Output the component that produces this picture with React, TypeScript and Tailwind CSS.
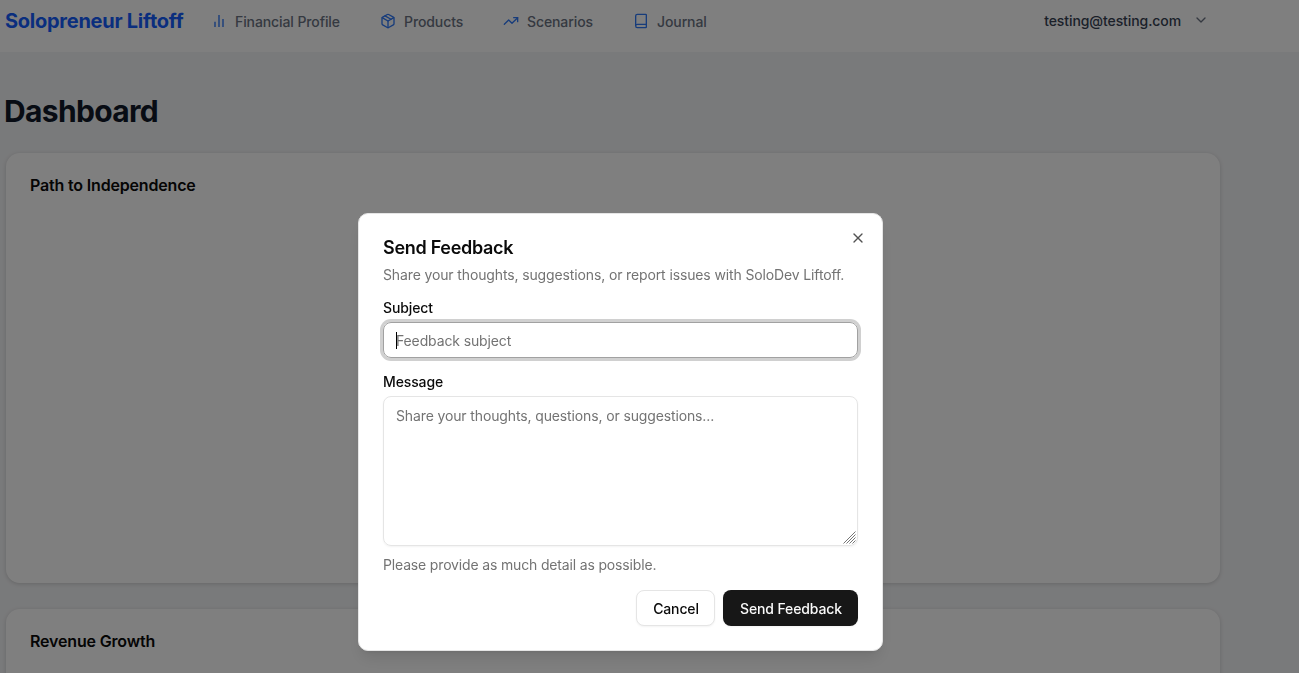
import { useState } from "react";
import type { ReactNode } from "react";
import { Book, ChevronDown, Package, TrendingUp, X } from "lucide-react";

// Plain three-bar icon, drawn on the same 24px grid as the lucide ones.
function BarsIcon({ className }: { className?: string }) {
  return (
    <svg viewBox="0 0 24 24" fill="none" stroke="currentColor" strokeWidth="2.8" className={className}>
      <path d="M18 21V9M12 21V3M6 21v-8" />
    </svg>
  );
}

function NavItem({ icon, label, className }: { icon: ReactNode; label: string; className: string }) {
  return (
    <a href="#" className={`flex items-center gap-2 text-sm font-medium text-gray-500 ${className}`}>
      <span className="-mt-0.5 text-[#2f78f6]">{icon}</span>
      <span className="tracking-[-0.1px]">{label}</span>
    </a>
  );
}

function Header() {
  return (
    <header className="flex h-[52px] items-start bg-white pl-[5px]">
      <div className="flex h-[43px] w-full items-center">
        <span className="-mt-0.5 w-[206px] text-xl font-bold tracking-[-0.26px] text-blue-600">Solopreneur Liftoff</span>
        <nav className="flex items-center">
          <NavItem className="w-[169px]" label="Financial Profile" icon={<BarsIcon className="size-4 opacity-75" />} />
          <NavItem className="w-[123px]" label="Products" icon={<Package className="size-4" />} />
          <NavItem className="w-[130px]" label="Scenarios" icon={<TrendingUp className="size-4" />} />
          <NavItem className="" label="Journal" icon={<Book className="size-4" />} />
        </nav>
        <button className="-mt-px mr-[90px] ml-auto flex items-center gap-3 text-sm font-medium tracking-[-0.09px] text-gray-700">
          testing@testing.com
          <ChevronDown className="-mt-0.5 size-4 text-gray-500" />
        </button>
      </div>
    </header>
  );
}

function Card({ title }: { title: string }) {
  return (
    <section className="h-[430px] w-[1214px] shrink-0 rounded-[14px] bg-white p-6 shadow-[0_1px_4px_rgba(0,0,0,0.16)]">
      <h2 className="text-base leading-4 font-semibold tracking-[-0.17px] text-neutral-950">{title}</h2>
    </section>
  );
}

// Diagonal resize handle in the textarea's bottom right corner.
function Grip() {
  return (
    <svg
      viewBox="0 0 13 13"
      fill="none"
      stroke="#666"
      strokeWidth="0.9"
      className="pointer-events-none absolute right-0.5 bottom-0.5 size-[13px]"
    >
      <path d="M0.5 12.5l12-12M3.5 12.5l9-9M6.5 12.5l6-6M9.5 12.5l3-3" />
    </svg>
  );
}

function FeedbackDialog({ onClose }: { onClose: () => void }) {
  const [subject, setSubject] = useState("");
  const [message, setMessage] = useState("");

  return (
    <div className="fixed inset-0 bg-black/50 pt-[213px] pl-[358px]">
      <form
        onSubmit={(e) => e.preventDefault()}
        className="relative flex w-[525px] flex-col gap-4 rounded-[10px] border border-neutral-200 bg-white px-6 pt-[25px] pb-6 text-sm tracking-[-0.13px] text-neutral-950 shadow-lg"
      >
        <button type="button" aria-label="Close" onClick={onClose} className="absolute top-4 right-4 opacity-70">
          <X className="size-4" />
        </button>
        <div className="flex flex-col gap-2">
          <h2 className="text-lg leading-none font-semibold tracking-[-0.3px]">Send Feedback</h2>
          <p className="text-neutral-500">Share your thoughts, suggestions, or report issues with SoloDev Liftoff.</p>
        </div>
        <div className="flex flex-col gap-[7px]">
          <label htmlFor="subject" className="leading-none font-medium">Subject</label>
          <div className="relative flex">
            <input
              id="subject"
              value={subject}
              onChange={(e) => setSubject(e.target.value)}
              placeholder="Feedback subject"
              className="h-9 w-full rounded-lg border border-neutral-400 px-3 ring-3 ring-[#d0d0d0] outline-none placeholder:text-neutral-500"
            />
            {subject === "" && <span className="absolute top-2.5 left-[13px] h-[17px] w-px bg-black" />}
          </div>
        </div>
        <div className="flex flex-col gap-[7px] pt-px">
          <label htmlFor="message" className="leading-none font-medium">Message</label>
          <div className="relative flex">
            <textarea
              id="message"
              value={message}
              onChange={(e) => setMessage(e.target.value)}
              placeholder="Share your thoughts, questions, or suggestions..."
              className="h-[150px] w-full resize-none rounded-lg border border-neutral-200 px-3 pt-[9px] pb-2 shadow-xs outline-none placeholder:text-neutral-500"
            />
            <Grip />
          </div>
          <p className="pt-0.5 tracking-[-0.16px] text-neutral-500">Please provide as much detail as possible.</p>
        </div>
        <div className="-mt-px flex justify-end gap-2 font-medium">
          <button type="button" onClick={onClose} className="h-9 w-[79px] rounded-lg border border-neutral-200 bg-white pt-0.5 pl-px shadow-xs">
            Cancel
          </button>
          <button type="submit" className="h-9 w-[135px] rounded-lg bg-neutral-900 pt-0.5 pl-px text-neutral-50 shadow-xs">
            Send Feedback
          </button>
        </div>
      </form>
    </div>
  );
}

export default function App() {
  const [open, setOpen] = useState(true);

  return (
    <div className="h-screen overflow-hidden bg-gray-100 font-['Inter',sans-serif]">
      <Header />
      <main className="flex flex-col pl-1.5">
        <h1 className="-ml-0.5 mt-[41px] mb-6 text-3xl font-bold tracking-[-0.65px] text-gray-900">Dashboard</h1>
        <div className="flex flex-col gap-[26px]">
          <Card title="Path to Independence" />
          <Card title="Revenue Growth" />
        </div>
      </main>
      {open && <FeedbackDialog onClose={() => setOpen(false)} />}
    </div>
  );
}
